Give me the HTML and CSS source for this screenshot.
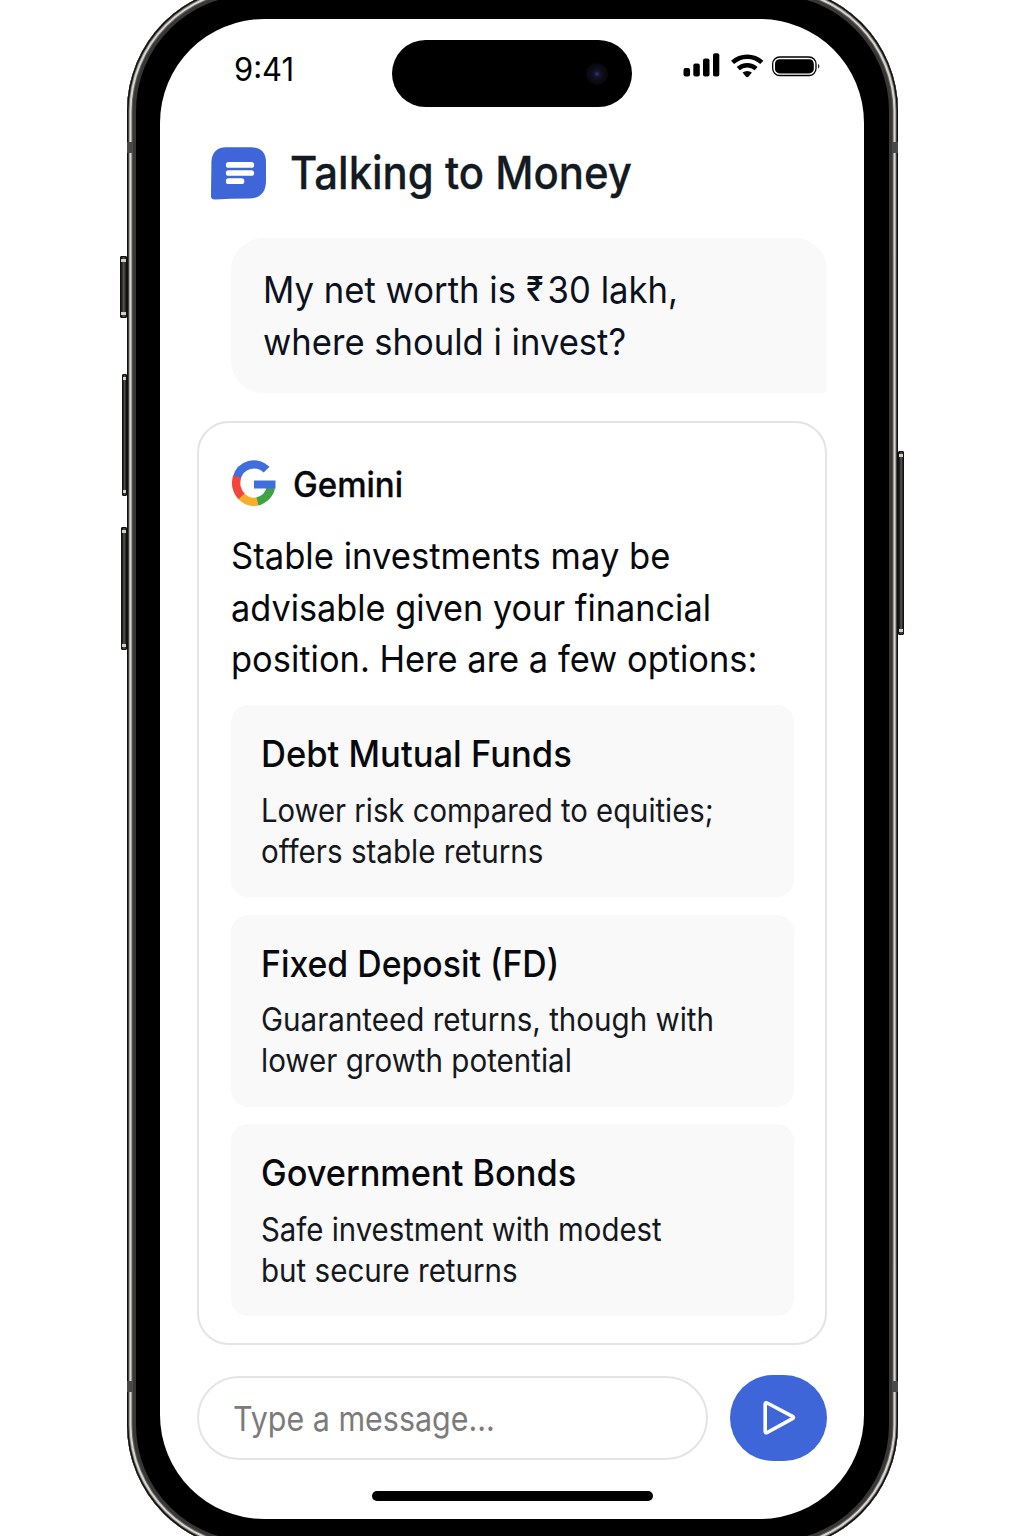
FILE: index.html
```html
<!DOCTYPE html>
<html lang="en">
<head>
<meta charset="utf-8">
<title>Talking to Money</title>
<link rel="stylesheet" href="styles.css">
</head>
<body>
<div class="phone">
  <i class="key key-action"></i>
  <i class="key key-up"></i>
  <i class="key key-down"></i>
  <i class="key key-power"></i>
  <i class="band band-tl"></i>
  <i class="band band-tr"></i>
  <i class="band band-bl"></i>
  <i class="band band-br"></i>
  <main class="screen">
    <div class="status">
      <span class="time"><span class="line time-text">9:41</span></span>
      <span class="island"><i class="lens"></i></span>
      <svg class="indicators" width="138" height="26" viewBox="0 0 138 26">
        <rect x="0.5" y="15" width="6.5" height="8.5" rx="2"/>
        <rect x="10.3" y="10.5" width="6.5" height="13" rx="2"/>
        <rect x="20" y="5.5" width="6.5" height="18" rx="2"/>
        <rect x="30" y="0.3" width="6.3" height="23.2" rx="2"/>
        <g fill="none" stroke="#000" stroke-width="4.500">
          <path d="M49.600 9.400a21.500 21.500 0 0 1 29.200 0"/>
          <path d="M55.300 15.600a13.500 13.500 0 0 1 17.800 0"/>
        </g>
        <path d="M59.500 19.600q4.700-3.400 9.400 0L65.600 23.500q-1.400 1.400-2.800 0z"/>
        <rect x="89.700" y="4" width="43.300" height="18.500" rx="7" fill="none" stroke="#000" stroke-width="1.300"/>
        <rect x="92" y="6.200" width="38.800" height="14.200" rx="4.500"/>
        <path d="M135.200 10.800q2.400 2.500 0 5z"/>
      </svg>
    </div>
    <header class="header">
      <svg class="logo" width="56" height="54" viewBox="0 0 56 54">
        <path d="M15 .2H40Q55 .6 55 15V34Q55 51 38 51.600L20 51.800L4 52.500Q0 52.500 0 49.200L.4 15Q1 .6 15 .2z" fill="#3f66d9"/>
        <path d="M17.700 17.900H40.300M17.700 26H40.300M17.700 34.200H30.500" stroke="#fff" stroke-width="5.700" stroke-linecap="round"/>
      </svg>
      <h1 class="title"><span class="line title-text">Talking to Money</span></h1>
    </header>
    <p class="question">
      <span class="line question-a">My net worth is <span class="rupee">₹</span>30 lakh,</span>
      <span class="line question-b">where should i invest?</span>
    </p>
    <section class="answer">
      <div class="source">
        <svg class="google" width="44" height="46" viewBox="0 0 44 46" fill="none" stroke-width="8.300">
          <path d="M4.650 18.200A18 18.700 0 0 1 34.600 9.700" stroke="#3f6fdc"/>
          <path d="M5.200 16.600A18 18.700 0 0 0 10.200 37" stroke="#f3453b"/>
          <path d="M9.500 36.300A18 18.700 0 0 0 26.500 41.200" stroke="#fbac2b"/>
          <path d="M25.500 41.400A18 18.700 0 0 0 39 27.500" stroke="#3fa346"/>
          <path d="M22 20.500H43.500V28.500H22z" fill="#3f6fdc" stroke="none"/>
        </svg>
        <h2 class="name"><span class="line name-text">Gemini</span></h2>
      </div>
      <p class="intro">
        <span class="line intro-a">Stable investments may be</span>
        <span class="line intro-b">advisable given your financial</span>
        <span class="line intro-c">position. Here are a few options:</span>
      </p>
      <div class="options">
        <article class="option debt">
          <h3 class="line">Debt Mutual Funds</h3>
          <p><span class="line first">Lower risk compared to equities;</span><span class="line">offers stable returns</span></p>
        </article>
        <article class="option deposit">
          <h3 class="line">Fixed Deposit (FD)</h3>
          <p><span class="line first">Guaranteed returns, though with</span><span class="line">lower growth potential</span></p>
        </article>
        <article class="option bonds">
          <h3 class="line">Government Bonds</h3>
          <p><span class="line first">Safe investment with modest</span><span class="line">but secure returns</span></p>
        </article>
      </div>
    </section>
    <form class="composer">
      <div class="field"><span class="line">Type a message...</span></div>
      <button class="send" type="button" aria-label="Send">
        <svg width="34" height="36" viewBox="0 0 34 36"><path d="M3.200 4.200Q3.200 2 5.200 3L30.500 16.300Q32.500 17.500 30.500 18.700L5.200 32.500Q3.200 33.500 3.200 31.300z" fill="none" stroke="#fff" stroke-width="3.600" stroke-linejoin="round"/></svg>
      </button>
    </form>
    <div class="home"></div>
  </main>
</div>
</body>
</html>
```
FILE: styles.css
```css
* { box-sizing: border-box; }
html, body { height: 100%; overflow: hidden; }
body { margin: 0; background: #fff; color: #08090c; font-family: Inter, "Liberation Sans", sans-serif; }
h1, h2, h3, p { margin: 0; }
svg { display: block; flex: none; }

.phone {
  position: relative;
  width: 771px;
  height: 1564px;
  margin: -14px 0 0 127px;
  padding: 33px 34px 31px 33px;
  border-radius: 125px;
  background: #000;
  box-shadow: inset 0 0 0 1.500px #111, inset 0 0 0 2.500px #77736f, inset 0 0 0 4.500px #d8d6d3, inset 0 0 0 5.500px #66625f, inset 0 0 0 9px #393736;
}
.key {
  position: absolute;
  background: linear-gradient(90deg, #111, #5a544c 55%, #1b1a18);
  border: 1px solid #111;
  border-radius: 1px;
}
.key::before, .key::after { content: ""; position: absolute; left: 0; right: 0; height: 3px; background: #d5cfc6; }
.key::before { top: 2px; }
.key::after { bottom: 2px; }
.key-action { left: -7px; top: 270px; width: 7px; height: 62px; }
.key-up { left: -5px; top: 388px; width: 5px; height: 122px; }
.key-down { left: -6px; top: 541px; width: 6px; height: 123px; }
.key-power { left: 771px; top: 465px; width: 6px; height: 184px; }
.band { position: absolute; width: 6px; height: 11px; background: #4b4848; }
.band-tl { left: 0; top: 156px; }
.band-tr { right: 0; top: 156px; }
.band-bl { left: 0; top: 1395px; }
.band-br { right: 0; top: 1395px; }

.screen {
  display: flex;
  flex-direction: column;
  height: 1500px;
  padding: 21px 37px 0;
  border-radius: 104px;
  background: #fff;
}

/* Each line carries a horizontal condensing factor */
.line { display: block; white-space: nowrap; transform: scaleX(var(--narrow, .924)); transform-origin: left; }

.status { display: grid; grid-template-columns: 195px 240px 1fr; height: 67px; }
.time { padding: 9px 0 0 37px; font-size: 32px; line-height: 41px; color: #000; }
.time-text { --narrow: .967; }
.island { display: flex; align-items: center; justify-content: flex-end; padding-right: 24px; border-radius: 34px; background: #000; }
.lens { width: 22px; height: 22px; border-radius: 50%; background: radial-gradient(circle, #3a3290 0, #15142c 18%, #0c0c16 45%, #07070b 70%, #000 100%); }
.indicators { margin: 13px 0 0 51px; }

.header { display: flex; gap: 23px; margin: 40px 0 0 14px; height: 54px; }
.title { width: 380px; font-size: 45px; line-height: 52px; font-weight: 500; color: #131a22; -webkit-text-stroke: .3px #131a22; }
.title-text { --narrow: .931; }
.question {
  margin: 37px 0 0 34px;
  height: 155px;
  padding: 26px 32px;
  border-radius: 32px 32px 4px 32px;
  background: #f9f9fa;
  font-size: 37px;
  line-height: 52px;
  color: #0c111c;
}
.question-a { --narrow: .937; }
.question-b { --narrow: .935; }
.rupee { display: inline-block; margin-right: 3px; font-weight: 500; transform: translateY(-1px) scale(.9, .92); }
.answer {
  margin-top: 28px;
  height: 924px;
  padding: 37px 31px 0 32px;
  border: 2px solid #e4e4e6;
  border-radius: 32px;
}
.source { display: flex; gap: 17px; margin-left: 1px; height: 46px; }
.name { font-size: 35px; line-height: 48px; font-weight: 500; -webkit-text-stroke: .3px #08090c; }
.name-text { --narrow: .945; }
.intro { margin-top: 24px; font-size: 37px; line-height: 51.700px; }
.intro-a { --narrow: .936; }
.intro-b { --narrow: .926; }
.intro-c { --narrow: .931; }
.options { display: grid; gap: 17.500px; margin-top: 20px; }
.option { height: 192px; padding: 26px 30px; border-radius: 17px; background: #f9f9fa; }
.option h3 { font-size: 37px; line-height: 46px; font-weight: 500; }
.option p { margin-top: 12.500px; font-size: 32px; line-height: 41px; color: #15181c; }
.debt h3 { --narrow: .934; }
.deposit h3 { --narrow: .913; }
.bonds h3 { --narrow: .928; }
.debt .first { --narrow: .915; }
.bonds .first { --narrow: .917; }

.composer { display: flex; gap: 22px; margin-top: 30px; height: 86px; }
.field { --narrow: .895; flex: 1; margin: 1px 0; padding: 0 34px; border: 2px solid #e4e4e6; border-radius: 42px; font-size: 34px; line-height: 82px; color: #7b7b7b; }
.send { display: flex; align-items: center; justify-content: center; width: 97px; padding: 0; border: 0; border-radius: 43px; background: #3f66d9; }
.home { align-self: center; width: 281px; height: 10px; margin: 30px 0 0 1px; border-radius: 5px; background: #000; }
```
